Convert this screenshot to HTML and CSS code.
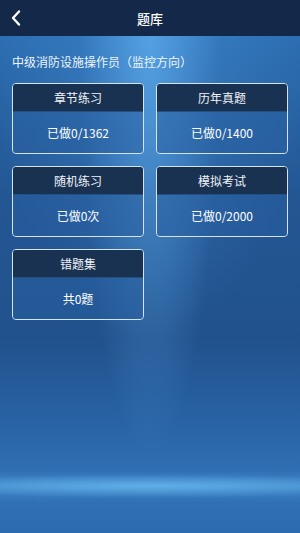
FILE: index.html
```
<!DOCTYPE html>
<html lang="zh-CN">
<head>
    <meta charset="UTF-8">
    <meta name="viewport" content="width=device-width, initial-scale=1.0">
    <title>题库</title>
    <link rel="stylesheet" href="styles.css">
</head>
<body>
    <div class="page">
        <div class="topbar">
            <span class="back">
                <svg width="12" height="18" viewBox="0 0 12 18">
                    <path d="M9 2.5 L3 9 L9 15.5" fill="none" stroke="#fff" stroke-width="2.4" stroke-linecap="round" stroke-linejoin="round"/>
                </svg>
            </span>
            <span class="title">题库</span>
        </div>

        <div class="subject">中级消防设施操作员（监控方向）</div>

        <div class="grid">
            <div class="card">
                <div class="card-head">章节练习</div>
                <div class="card-body">已做0/1362</div>
            </div>
            <div class="card">
                <div class="card-head">历年真题</div>
                <div class="card-body">已做0/1400</div>
            </div>
            <div class="card">
                <div class="card-head">随机练习</div>
                <div class="card-body">已做0次</div>
            </div>
            <div class="card">
                <div class="card-head">模拟考试</div>
                <div class="card-body">已做0/2000</div>
            </div>
            <div class="card">
                <div class="card-head">错题集</div>
                <div class="card-body">共0题</div>
            </div>
        </div>
    </div>
</body>
</html>
```

FILE: styles.css
```
html, body {
    margin: 0;
    padding: 0;
}
body {
    font-family: "Noto Sans CJK SC", "Noto Sans", sans-serif;
    color: #fff;
    width: 300px;
    height: 533px;
    overflow: hidden;
}
.page {
    height: 533px;
    background-color: #21538f;
    background-image:
        radial-gradient(ellipse 260px 12px at 150px 486px, rgba(120,205,255,0.55), rgba(120,205,255,0) 100%),
        linear-gradient(180deg, rgba(100,190,250,0) 470px, rgba(100,190,250,0.3) 486px, rgba(100,190,250,0) 502px),
        radial-gradient(ellipse 70px 420px at 150px 36px, rgba(110,190,255,0.5), rgba(110,190,255,0) 100%),
        radial-gradient(ellipse 160px 300px at 150px 36px, rgba(80,160,230,0.4), rgba(80,160,230,0) 100%),
        linear-gradient(180deg, #2b6db0 36px, #235693 200px, #21528d 340px, #2b67aa 440px, #3272b6 486px, #2d6bb0 533px);
}
.topbar {
    height: 36px;
    background: #142949;
    display: flex;
    align-items: center;
    justify-content: center;
    position: relative;
}
.back {
    position: absolute;
    left: 10px;
    top: 9px;
    display: flex;
}
.title {
    font-size: 13px;
    font-weight: 500;
}
.subject {
    font-size: 12px;
    padding: 17px 12px 0;
    height: 30px;
    color: #eef4fb;
}
.grid {
    display: grid;
    grid-template-columns: 132px 132px;
    column-gap: 12px;
    row-gap: 12px;
    padding: 0 12px;
}
.card {
    height: 69px;
    border: 1px solid #d6e3f0;
    border-radius: 4px;
    overflow: hidden;
    display: flex;
    flex-direction: column;
}
.card-head {
    height: 27px;
    background: #1a3252;
    border-bottom: 1px solid #23507f;
    font-size: 12px;
    color: #f0f4f8;
    display: flex;
    align-items: center;
    justify-content: center;
}
.card-body {
    flex: 1;
    background: rgba(40, 95, 160, 0.55);
    font-size: 12px;
    display: flex;
    align-items: center;
    justify-content: center;
}
```
